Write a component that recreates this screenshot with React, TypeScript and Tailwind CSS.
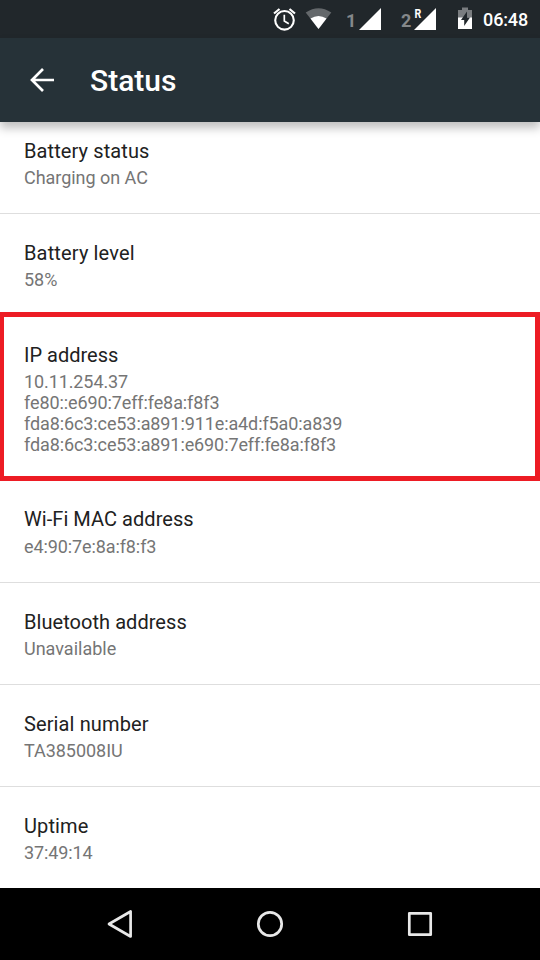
import React from "react";

type RowProps = {
  title: string;
  lines: string[];
  className: string;
  gap?: string;
  titleTracking?: string;
  lineTracking?: string;
};

function Row({
  title,
  lines,
  className,
  gap = "mt-[4px]",
  titleTracking = "tracking-[0.05px]",
  lineTracking = "tracking-[-0.1px]",
}: RowProps) {
  return (
    <section className={`px-6 ${className}`}>
      <h2 className={`text-[20px] leading-[24px] text-[#212121] ${titleTracking}`}>{title}</h2>
      <div className={`${gap} ${lineTracking} text-[18px] leading-[21px] text-[#757575]`}>
        {lines.map((line) => (
          <p key={line}>{line}</p>
        ))}
      </div>
    </section>
  );
}

export default function App() {
  return (
    <div className="flex h-[960px] w-[540px] flex-col overflow-hidden bg-white font-['Roboto',sans-serif]">
      <div className="flex h-[38px] shrink-0 items-center justify-end bg-[#21272b] pr-3 text-white">
        <svg width="210" height="38" viewBox="270 0 210 38" fill="none">
          <circle cx="284.500" cy="20.300" r="9.300" stroke="white" strokeWidth="2.100" />
          <path d="M284.300 14.800v6.200l4.500 2.700" stroke="white" strokeWidth="1.700" />
          <path d="M274 13.500l5.500-4.500M295 13.500l-5.500-4.500" stroke="white" strokeWidth="2.200" />
          <path d="M305.700 12.500Q318.500 3.800 331.300 12.500L318.500 29Z" fill="#64686b" />
          <path d="M310.500 18.500Q318.500 13.500 326.500 18.500L318.500 29Z" fill="white" />
          <path d="M381 8v22h-22z" fill="white" />
          <path d="M436 8v22h-22z" fill="white" />
          <path d="M458 10h4V7.500h6V10h4v8h-14z" fill="#7a7d80" />
          <path d="M458 17.500h14V29h-14z" fill="white" />
          <path d="M467 11.500l-6 8.500h3.200V26l5.800-8.500h-3z" fill="#21272b" />
          <text x="346" y="27" fontSize="18" fontWeight="700" fill="#85888a">1</text>
          <text x="401" y="27" fontSize="18" fontWeight="700" fill="#85888a">2</text>
          <text x="414.500" y="18" fontSize="12" fontWeight="700" textLength="6.800" lengthAdjust="spacingAndGlyphs" fill="white">R</text>
        </svg>
        <span className="ml-[3px] text-[18px] font-medium tracking-[-0.15px]">06:48</span>
      </div>
      <header className="z-10 flex h-[84px] shrink-0 items-center bg-[#263238] pl-[30px] text-white shadow-[0_6px_9px_rgba(0,0,0,0.25)]">
        <svg width="24" height="24" viewBox="0 0 24 24" fill="none" stroke="white" strokeWidth="2.700">
          <path d="M24 12H2M13 1L2 12L13 23" />
        </svg>
        <h1 className="ml-9 text-[30px] font-medium">Status</h1>
      </header>
      <main className="flex flex-1 flex-col">
        <Row title="Battery status" lines={["Charging on AC"]} titleTracking="tracking-[0.1px]" lineTracking="tracking-[-0.04px]" className="h-[92px] border-b border-[#dedede] pt-[17px]" />
        <Row title="Battery level" lines={["58%"]} titleTracking="tracking-[0.15px]" lineTracking="tracking-normal" className="h-[98px] pt-[27px]" />
        <Row title="IP address" lines={["10.11.254.37", "fe80::e690:7eff:fe8a:f8f3", "fda8:6c3:ce53:a891:911e:a4d:f5a0:a839", "fda8:6c3:ce53:a891:e690:7eff:fe8a:f8f3"]} titleTracking="tracking-normal" className="h-[169px] border-[5px] border-l-[4px] border-[#ed1c24] !px-5 pt-[26px]" />
        <Row title="Wi-Fi MAC address" lines={["e4:90:7e:8a:f8:f3"]} gap="mt-[5px]" className="h-[102px] border-b border-[#dedede] pt-[26px]" />
        <Row title="Bluetooth address" lines={["Unavailable"]} lineTracking="tracking-normal" className="h-[102px] border-b border-[#dedede] pt-[27px]" />
        <Row title="Serial number" lines={["TA385008IU"]} titleTracking="tracking-[0.12px]" lineTracking="tracking-[-0.04px]" className="h-[102px] border-b border-[#dedede] pt-[27px]" />
        <Row title="Uptime" lines={["37:49:14"]} titleTracking="tracking-[0.12px]" className="h-[101px] pt-[27px]" />
      </main>
      <nav className="flex h-[72px] shrink-0 bg-black">
        <svg width="540" height="72" viewBox="0 888 540 72" fill="none" stroke="#e8e8e8" strokeWidth="2.700" strokeLinejoin="round">
          <path d="M130.600 911.500v25L109 924z" />
          <circle cx="270" cy="924" r="11.700" />
          <rect x="409.300" y="913.300" width="21.400" height="21.400" />
        </svg>
      </nav>
    </div>
  );
}
